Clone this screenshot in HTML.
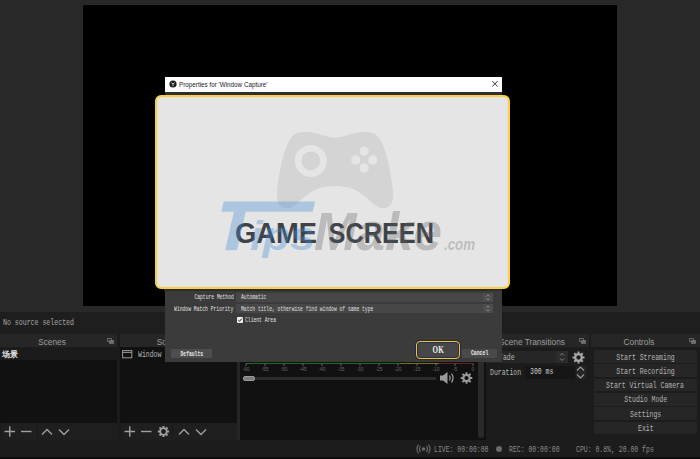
<!DOCTYPE html>
<html><head><meta charset="utf-8">
<style>
*{margin:0;padding:0;box-sizing:border-box}
html,body{width:700px;height:459px;overflow:hidden;background:#282828;font-family:"Liberation Sans",sans-serif}
.a{position:absolute}
.mono{font-family:"Liberation Mono",monospace;white-space:pre}
.sq{display:inline-block;transform-origin:0 50%}
</style></head><body>
<!-- preview -->
<div class="a" style="left:83px;top:5px;width:534px;height:301px;background:#000"></div>
<!-- no source bar -->
<div class="a" style="left:0;top:312px;width:700px;height:22px;background:#1e1e1e"></div>
<div class="a mono" style="left:3px;top:317.8px;font-size:9px;color:#a8a8a8;line-height:10px"><span class="sq" style="transform:scaleX(0.73)">No source selected</span></div>

<!-- docks area bg -->
<div class="a" style="left:0;top:334px;width:700px;height:125px;background:#1c1c1c"></div>

<!-- Scenes dock -->
<div class="a" style="left:0;top:334px;width:117px;height:13px;background:#262626"></div>
<div class="a" style="left:0;top:335.5px;width:104px;text-align:center;font-size:8.3px;line-height:13px;color:#9c9c9c">Scenes</div>
<svg class="a" style="left:107px;top:337.5px" width="8" height="7" viewBox="0 0 8 7"><rect x="0.5" y="0.5" width="4" height="3" fill="none" stroke="#707070" stroke-width="0.8"/><rect x="2.5" y="2.5" width="4" height="3" fill="#707070" stroke="#707070" stroke-width="0.8"/></svg>
<div class="a" style="left:0;top:347px;width:117px;height:76px;background:#111"></div>
<div class="a" style="left:0;top:347px;width:117px;height:13px;background:#1b1b1b"></div>
<div class="a" style="left:2px;top:349px;font-size:8px;line-height:11px;color:#e0e0e0;font-weight:700">场景</div>
<div class="a" style="left:1px;top:423px;width:116px;height:17px;background:#1f1f1f"></div><div class="a" style="left:37px;top:424px;width:1px;height:15px;background:#191919"></div>
<svg class="a" style="left:0;top:423px" width="117" height="17" viewBox="0 0 117 17" stroke="#a0a0a0" stroke-width="1.4" fill="none">
<path d="M4.5 8.5H15M9.75 3.2V13.8"/><path d="M21 8.5H31.5"/><path d="M42 11.5L47 6.5L52 11.5"/><path d="M59 6.5L64 11.5L69 6.5"/>
</svg>

<!-- Sources dock -->
<div class="a" style="left:120px;top:334px;width:117px;height:13px;background:#262626"></div>
<div class="a" style="left:120px;top:335.5px;width:104px;text-align:center;font-size:8.3px;line-height:13px;color:#9c9c9c">Sources</div>
<div class="a" style="left:120px;top:347px;width:117px;height:76px;background:#111"></div>
<svg class="a" style="left:122px;top:350px" width="11" height="9" viewBox="0 0 11 9"><rect x="0.6" y="0.6" width="9.2" height="7.2" fill="none" stroke="#9a9a9a" stroke-width="1"/><path d="M0.6 2.4H9.8" stroke="#9a9a9a" stroke-width="1"/></svg>
<div class="a mono" style="left:138px;top:350.3px;font-size:9px;line-height:10px;color:#b8b8b8"><span class="sq" style="transform:scaleX(0.72)">Window Capture</span></div>
<div class="a" style="left:121px;top:423px;width:116px;height:17px;background:#1f1f1f"></div><div class="a" style="left:172px;top:424px;width:1px;height:15px;background:#191919"></div>
<svg class="a" style="left:120px;top:423px" width="117" height="17" viewBox="0 0 117 17" stroke="#a0a0a0" stroke-width="1.4" fill="none">
<path d="M4.5 8.5H15M9.75 3.2V13.8"/><path d="M21 8.5H31.5"/><path d="M59 11.5L64 6.5L69 11.5"/><path d="M76 6.5L81 11.5L86 6.5"/>
<g transform="translate(43.5 8.5)"><circle r="3.3" stroke-width="1.8" stroke="#a0a0a0"/><path d="M3.50 0.00L5.60 0.00M2.47 2.47L3.96 3.96M0.00 3.50L0.00 5.60M-2.47 2.47L-3.96 3.96M-3.50 0.00L-5.60 0.00M-2.47 -2.47L-3.96 -3.96M-0.00 -3.50L-0.00 -5.60M2.47 -2.47L3.96 -3.96" stroke-width="1.9"/></g>
</svg>

<!-- Mixer dock -->
<div class="a" style="left:240px;top:334px;width:246px;height:13px;background:#262626"></div>
<div class="a" style="left:237px;top:347px;width:3px;height:93px;background:#252525"></div>
<div class="a" style="left:240px;top:347px;width:246px;height:93px;background:#111"></div>
<div class="a" style="left:246px;top:362.8px;width:154px;height:1px;background:#1f6a1f"></div>
<div class="a" style="left:400px;top:362.8px;width:39px;height:1px;background:#7a7020"></div>
<div class="a" style="left:439px;top:362.8px;width:34px;height:1px;background:#6a1f1f"></div>
<svg class="a" style="left:240px;top:363px" width="240" height="10" viewBox="0 0 240 10" font-family="Liberation Sans" font-size="5" fill="#666" text-anchor="middle">
<g stroke="#777" stroke-width="0.8">
<path d="M6 0.5V3M25 0.5V3M44 0.5V3M63 0.5V3M82 0.5V3M101 0.5V3M120 0.5V3M139 0.5V3M158 0.5V3M177 0.5V3M196 0.5V3M215 0.5V3M233 0.5V3"/>
</g>
<text x="6" y="8">-60</text><text x="25" y="8">-55</text><text x="44" y="8">-50</text><text x="63" y="8">-45</text><text x="82" y="8">-40</text><text x="101" y="8">-35</text><text x="120" y="8">-30</text><text x="139" y="8">-25</text><text x="158" y="8">-20</text><text x="177" y="8">-15</text><text x="196" y="8">-10</text><text x="215" y="8">-5</text><text x="233" y="8">0</text>
</svg>
<div class="a" style="left:255px;top:377.3px;width:181px;height:2.7px;background:#2c2c2c"></div>
<div class="a" style="left:243px;top:375.8px;width:12px;height:5.4px;border-radius:2px;background:#7c7c7c;border:0.6px solid #999"></div>
<svg class="a" style="left:438px;top:371px" width="40" height="14" viewBox="0 0 40 14">
<path d="M2 4.5H5L9.5 1V13L5 9.5H2Z" fill="#9a9a9a"/>
<path d="M11.5 4.5Q13 7 11.5 9.5M13.5 2.5Q16.5 7 13.5 11.5" stroke="#9a9a9a" stroke-width="1.3" fill="none"/>
<g transform="translate(28.5 7)"><circle r="3.2" stroke-width="2.2" stroke="#9a9a9a" fill="none"/><path d="M3.60 0.00L5.80 0.00M2.55 2.55L4.10 4.10M0.00 3.60L0.00 5.80M-2.55 2.55L-4.10 4.10M-3.60 0.00L-5.80 0.00M-2.55 -2.55L-4.10 -4.10M-0.00 -3.60L-0.00 -5.80M2.55 -2.55L4.10 -4.10" stroke="#9a9a9a" stroke-width="1.9"/></g>
</svg>
<div class="a" style="left:478px;top:347px;width:6px;height:91px;border-radius:0 0 3px 3px;background:#2a2a2a"></div>

<!-- Transitions dock -->
<div class="a" style="left:486px;top:334px;width:103px;height:13px;background:#262626"></div>
<div class="a" style="left:486px;top:335.5px;width:92px;text-align:center;font-size:8.3px;line-height:13px;color:#9c9c9c;white-space:pre">Scene Transitions</div>
<svg class="a" style="left:579px;top:337.5px" width="8" height="7" viewBox="0 0 8 7"><rect x="0.5" y="0.5" width="4" height="3" fill="none" stroke="#707070" stroke-width="0.8"/><rect x="2.5" y="2.5" width="4" height="3" fill="#707070" stroke="#707070" stroke-width="0.8"/></svg>
<div class="a" style="left:486px;top:351px;width:82px;height:12px;background:#262626;border-radius:1px"></div>
<div class="a" style="left:556px;top:351px;width:12px;height:12px;background:#2c2c2c"></div>
<svg class="a" style="left:556px;top:351px" width="12" height="12" viewBox="0 0 12 12" stroke="#8a8a8a" stroke-width="0.9" fill="none"><path d="M4 4.5L6 2.5L8 4.5M4 7.5L6 9.5L8 7.5"/></svg>
<div class="a mono" style="left:499px;top:352.5px;font-size:9px;line-height:10px;color:#b8b8b8"><span class="sq" style="transform:scaleX(0.72)">Fade</span></div>
<svg class="a" style="left:571px;top:350px" width="15" height="15" viewBox="0 0 15 15"><g transform="translate(7.5 7.5)"><circle r="3.3" stroke-width="2.3" stroke="#a8a8a8" fill="none"/><path d="M3.70 0.00L6.00 0.00M2.62 2.62L4.24 4.24M0.00 3.70L0.00 6.00M-2.62 2.62L-4.24 4.24M-3.70 0.00L-6.00 0.00M-2.62 -2.62L-4.24 -4.24M-0.00 -3.70L-0.00 -6.00M2.62 -2.62L4.24 -4.24" stroke="#a8a8a8" stroke-width="2"/></g></svg>
<div class="a mono" style="left:490px;top:368px;font-size:9px;line-height:10px;color:#b8b8b8"><span class="sq" style="transform:scaleX(0.72)">Duration</span></div>
<div class="a" style="left:525px;top:366px;width:50px;height:13px;background:#161616;border-radius:1px"></div>
<div class="a mono" style="left:530px;top:367px;font-size:9px;line-height:10px;color:#d0d0d0"><span class="sq" style="transform:scaleX(0.72)">300 ms</span></div>
<div class="a" style="left:575.5px;top:365.7px;width:10px;height:13px;background:#252525;border-radius:2px"></div>
<svg class="a" style="left:575px;top:365px" width="11" height="15" viewBox="0 0 11 15" stroke="#999" stroke-width="1.1" fill="none"><path d="M2 5.5L5.5 2L9 5.5M2 9.5L5.5 13L9 9.5"/></svg>

<!-- Controls dock -->
<div class="a" style="left:591px;top:334px;width:109px;height:13px;background:#262626"></div>
<div class="a" style="left:591px;top:335.5px;width:96px;text-align:center;font-size:8.3px;line-height:13px;color:#9c9c9c">Controls</div>
<svg class="a" style="left:689px;top:337.5px" width="8" height="7" viewBox="0 0 8 7"><rect x="0.5" y="0.5" width="4" height="3" fill="none" stroke="#707070" stroke-width="0.8"/><rect x="2.5" y="2.5" width="4" height="3" fill="#707070" stroke="#707070" stroke-width="0.8"/></svg>
<div class="a" style="left:594px;top:350px;width:103px;height:12.7px;background:#262626;border-radius:1px"></div>
<div class="a" style="left:594px;top:364.3px;width:103px;height:12.7px;background:#262626;border-radius:1px"></div>
<div class="a" style="left:594px;top:378.6px;width:103px;height:12.7px;background:#262626;border-radius:1px"></div>
<div class="a" style="left:594px;top:392.9px;width:103px;height:12.7px;background:#262626;border-radius:1px"></div>
<div class="a" style="left:594px;top:407.2px;width:103px;height:12.7px;background:#262626;border-radius:1px"></div>
<div class="a" style="left:594px;top:421.5px;width:103px;height:12.7px;background:#262626;border-radius:1px"></div>
<div class="a mono" style="left:574px;top:352.5px;width:143px;text-align:center;font-size:9px;line-height:10px;color:#b4b4b4"><span class="sq" style="transform:scaleX(0.72);transform-origin:50% 50%">Start Streaming</span></div>
<div class="a mono" style="left:574px;top:366.8px;width:143px;text-align:center;font-size:9px;line-height:10px;color:#b4b4b4"><span class="sq" style="transform:scaleX(0.72);transform-origin:50% 50%">Start Recording</span></div>
<div class="a mono" style="left:574px;top:381.1px;width:143px;text-align:center;font-size:9px;line-height:10px;color:#b4b4b4"><span class="sq" style="transform:scaleX(0.72);transform-origin:50% 50%">Start Virtual Camera</span></div>
<div class="a mono" style="left:574px;top:395.4px;width:143px;text-align:center;font-size:9px;line-height:10px;color:#b4b4b4"><span class="sq" style="transform:scaleX(0.72);transform-origin:50% 50%">Studio Mode</span></div>
<div class="a mono" style="left:574px;top:409.7px;width:143px;text-align:center;font-size:9px;line-height:10px;color:#b4b4b4"><span class="sq" style="transform:scaleX(0.72);transform-origin:50% 50%">Settings</span></div>
<div class="a mono" style="left:574px;top:424px;width:143px;text-align:center;font-size:9px;line-height:10px;color:#b4b4b4"><span class="sq" style="transform:scaleX(0.72);transform-origin:50% 50%">Exit</span></div>

<!-- status bar -->
<svg class="a" style="left:415px;top:443px" width="17" height="12" viewBox="0 0 17 12" fill="none" stroke="#6a6a6a" stroke-width="1.2"><circle cx="8.5" cy="6" r="1.8" fill="#6a6a6a" stroke="none"/><path d="M5.5 3Q3.5 6 5.5 9M11.5 3Q13.5 6 11.5 9M3.5 1.5Q0.5 6 3.5 10.5M13.5 1.5Q16.5 6 13.5 10.5"/></svg>
<div class="a mono" style="left:434px;top:444.5px;font-size:9px;line-height:10px;color:#8a8a8a"><span class="sq" style="transform:scaleX(0.72)">LIVE: 00:00:00</span></div>
<div class="a" style="left:495.5px;top:446px;width:6px;height:6px;border-radius:50%;background:#6a6a6a"></div>
<div class="a mono" style="left:509px;top:444.5px;font-size:9px;line-height:10px;color:#8a8a8a"><span class="sq" style="transform:scaleX(0.72)">REC: 00:00:00</span></div>
<div class="a mono" style="left:576px;top:444.5px;font-size:9px;line-height:10px;color:#8a8a8a"><span class="sq" style="transform:scaleX(0.72)">CPU: 0.8%, 20.00 fps</span></div>
<div class="a" style="left:0;top:457px;width:700px;height:2px;background:#0c0c0c"></div>

<!-- dialog -->
<div class="a" style="left:165px;top:77px;width:337px;height:285px;background:#3b3b3b"></div>
<div class="a" style="left:165px;top:77px;width:337px;height:14.5px;background:#fff"></div>
<svg class="a" style="left:168.5px;top:80px" width="8" height="8" viewBox="0 0 8 8"><circle cx="4" cy="4" r="3.6" fill="#1a1a1a"/><path d="M4 4L2.3 2.6M4 4L5.7 2.6M4 4V6.2" stroke="#ddd" stroke-width="0.9"/></svg>
<div class="a" style="left:179px;top:79.5px;font-size:6.3px;line-height:9px;color:#222;white-space:pre">Properties for 'Window Capture'</div>
<svg class="a" style="left:490px;top:79px" width="10" height="10" viewBox="0 0 10 10"><path d="M2.3 2L7.7 7.6M7.7 2L2.3 7.6" stroke="#303030" stroke-width="0.95"/></svg>
<div class="a" style="left:165px;top:91.5px;width:337px;height:4px;background:#2c2d36"></div>

<!-- game screen overlay -->
<div class="a" style="left:155px;top:95px;width:354.5px;height:194px;border:2.6px solid #fad33a;border-radius:6px;background:#e5e5e5;box-shadow:inset 0 0 0 1px #dedfe9;overflow:hidden"></div>
<svg class="a" style="left:0;top:0" width="700" height="459" viewBox="0 0 700 459">
<path fill="#d4d4d4" d="M305 132 C318 132 325 137.5 335 137.5 C345 137.5 352 132 365 132 C373 132 377 134.5 380 139 C386 150 391 170 393 192 C394 203 390 208.5 382.4 208.3 C376 208 370 200 362 194 C354 188 345 186 335 186 C325 186 316 188 308 194 C300 200 294 208 287.6 208.3 C280 208.5 276 203 277 192 C279 170 284 150 290 139 C293 134.5 297 132 305 132 Z"/>
<circle cx="310.8" cy="160.9" r="16" fill="#e5e5e5"/>
<circle cx="310.8" cy="160.9" r="9.4" fill="#d4d4d4"/>
<circle cx="364.1" cy="151.1" r="4.6" fill="#e5e5e5"/>
<circle cx="355.7" cy="159.9" r="4.6" fill="#e5e5e5"/>
<circle cx="372.9" cy="159.9" r="4.6" fill="#e5e5e5"/>
<circle cx="364.1" cy="168.1" r="4.6" fill="#e5e5e5"/>
<text x="235" y="243.3" font-family="Liberation Sans" font-weight="700" font-size="28.6" fill="#3e4249" textLength="82" lengthAdjust="spacingAndGlyphs">GAME</text>
<text x="328.5" y="243.3" font-family="Liberation Sans" font-weight="700" font-size="28.6" fill="#3e4249" textLength="105.5" lengthAdjust="spacingAndGlyphs">SCREEN</text>
<g fill="rgb(66,141,211)" fill-opacity="0.35">
<polygon points="223.6,201.6 315,201.6 312.7,211.8 221.3,211.8"/>
<polygon points="233.9,211.8 245.7,211.8 237,250.3 225.2,250.3"/>
<text x="250" y="250" font-family="Liberation Sans" font-weight="700" font-style="italic" font-size="40" textLength="65" lengthAdjust="spacingAndGlyphs">ips</text>
</g>
<g fill="rgb(95,95,95)" fill-opacity="0.31">
<text x="314" y="249.6" font-family="Liberation Sans" font-weight="700" font-style="italic" font-size="53" textLength="128" lengthAdjust="spacingAndGlyphs">Make</text>
</g>
<text x="444" y="250.4" font-family="Liberation Sans" font-weight="700" font-style="italic" font-size="17" fill="rgb(89,89,89)" fill-opacity="0.3" textLength="31" lengthAdjust="spacingAndGlyphs">.com</text>
</svg>

<!-- OK/Cancel -->
<div class="a" style="left:164px;top:289px;width:338px;height:2px;background:#2a2b34"></div>
<div class="a mono" style="left:133.6px;top:293px;width:100px;text-align:right;font-size:7px;line-height:9px;color:#e4e4e4"><span class="sq" style="transform:scaleX(0.67);transform-origin:100% 50%">Capture Method</span></div>
<div class="a" style="left:236px;top:292.5px;width:257px;height:9px;background:#474747;border-radius:1px"></div>
<div class="a" style="left:483px;top:292.5px;width:10px;height:9px;background:#4d4d4d"></div>
<svg class="a" style="left:483px;top:292.5px" width="10" height="9" viewBox="0 0 10 9" stroke="#9a9a9a" stroke-width="0.8" fill="none"><path d="M3.3 3.6L5 1.9L6.7 3.6M3.3 5.4L5 7.1L6.7 5.4"/></svg>
<div class="a mono" style="left:241px;top:292.5px;font-size:7px;line-height:9px;color:#e0e0e0"><span class="sq" style="transform:scaleX(0.67)">Automatic</span></div>
<div class="a mono" style="left:133.6px;top:305.3px;width:100px;text-align:right;font-size:7px;line-height:9px;color:#e4e4e4"><span class="sq" style="transform:scaleX(0.67);transform-origin:100% 50%">Window Match Priority</span></div>
<div class="a" style="left:236px;top:304px;width:257px;height:9px;background:#474747;border-radius:1px"></div>
<div class="a" style="left:483px;top:304px;width:10px;height:9px;background:#4d4d4d"></div>
<svg class="a" style="left:483px;top:304px" width="10" height="9" viewBox="0 0 10 9" stroke="#9a9a9a" stroke-width="0.8" fill="none"><path d="M3.3 3.6L5 1.9L6.7 3.6M3.3 5.4L5 7.1L6.7 5.4"/></svg>
<div class="a mono" style="left:241px;top:304.8px;font-size:7px;line-height:9px;color:#e0e0e0"><span class="sq" style="transform:scaleX(0.67)">Match title, otherwise find window of same type</span></div>
<div class="a" style="left:236.5px;top:317.2px;width:6px;height:6px;background:#f0f0f0;border-radius:1px"></div>
<svg class="a" style="left:236.5px;top:317.2px" width="6" height="6" viewBox="0 0 6 6"><path d="M1.2 3L2.5 4.3L4.9 1.5" stroke="#222" stroke-width="1" fill="none"/></svg>
<div class="a mono" style="left:244.5px;top:315.5px;font-size:7px;line-height:9px;color:#e4e4e4"><span class="sq" style="transform:scaleX(0.67)">Client Area</span></div>

<div class="a" style="left:171px;top:349px;width:41px;height:9px;background:#4e4e4e;border-radius:1px"></div>
<div class="a mono" style="left:171px;top:349.8px;width:41px;text-align:center;font-size:7px;line-height:9px;color:#e8e8e8;font-weight:700"><span class="sq" style="transform:scaleX(0.67);transform-origin:50% 50%">Defaults</span></div>
<div class="a" style="left:416px;top:340.5px;width:44px;height:18.3px;border:1.8px solid #ecc53c;border-radius:4px;background:#474747;box-shadow:0 0 0 1px #262a3e, inset 0 0 0 1px #2c3046"></div>
<div class="a" style="left:416px;top:343.5px;width:44px;text-align:center;font-family:'Liberation Serif',serif;font-size:10.5px;line-height:12px;color:#eeeeee;font-weight:700"><span class="sq" style="transform:scaleX(0.68);transform-origin:50% 50%">OK</span></div>
<div class="a" style="left:462px;top:348.7px;width:35px;height:9.5px;background:#4a4a4a;border-radius:1px"></div>
<div class="a mono" style="left:462px;top:349px;width:35px;text-align:center;font-size:7px;line-height:9px;color:#e8e8e8;font-weight:700"><span class="sq" style="transform:scaleX(0.69);transform-origin:50% 50%">Cancel</span></div>

</body></html>
